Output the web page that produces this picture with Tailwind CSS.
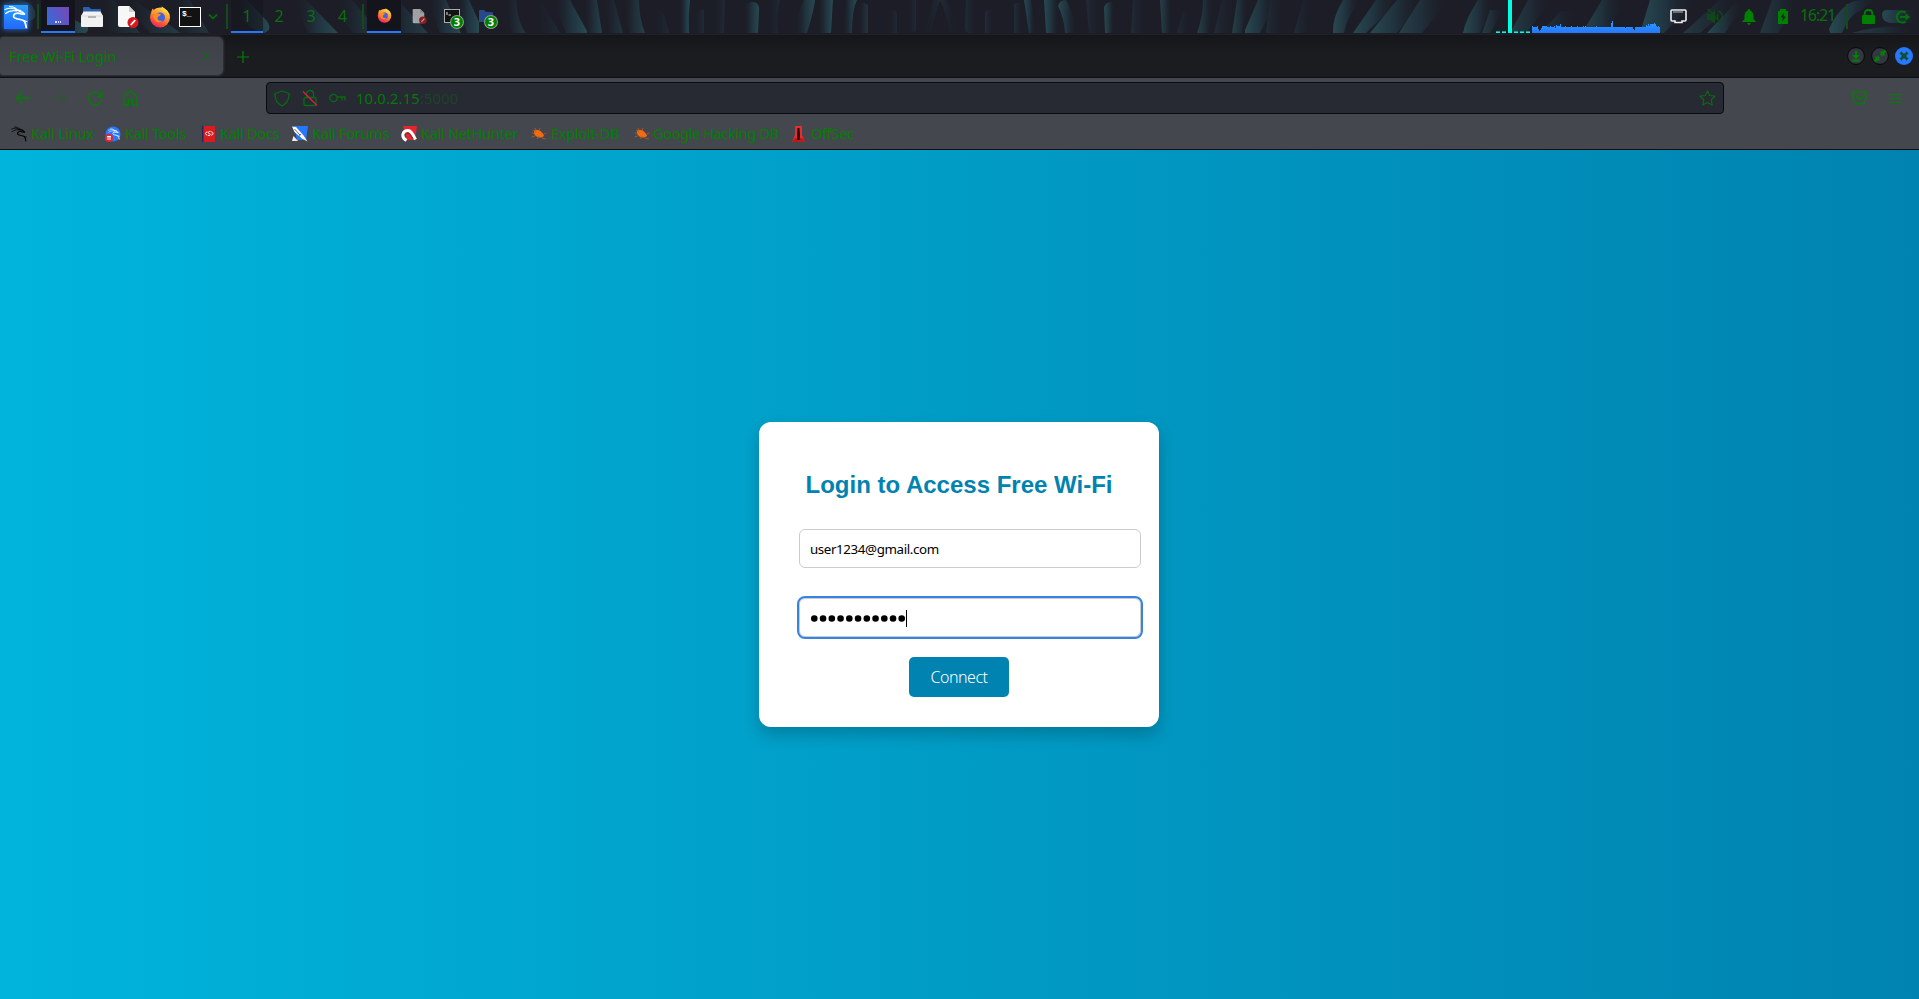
<!DOCTYPE html>
<html lang="en">
<head>
<meta charset="utf-8">
<title>Free Wi-Fi Login</title>
<script src="https://cdn.jsdelivr.net/npm/@tailwindcss/browser@4"></script>
</head>
<body class="flex h-screen flex-col overflow-hidden bg-[#191a1f] font-['Noto_Sans',sans-serif] text-[14.67px] text-[#008000]">

<!-- shared icons -->
<svg class="absolute size-0">
  <defs>
    <linearGradient id="l" x1="0" x2="1"><stop offset="0" stop-color="#1c1d26" stop-opacity="0"/><stop offset=".55" stop-color="#20333f"/><stop offset="1" stop-color="#284951"/></linearGradient>
    <linearGradient id="ld" x1="0" x2="1"><stop offset="0" stop-color="#1c1d26" stop-opacity="0"/><stop offset="1" stop-color="#202a37"/></linearGradient>
    <linearGradient id="r" x1="1" x2="0"><stop offset="0" stop-color="#1c1d26" stop-opacity="0"/><stop offset=".55" stop-color="#20333f"/><stop offset="1" stop-color="#284951"/></linearGradient>
    <linearGradient id="rd" x1="1" x2="0"><stop offset="0" stop-color="#1c1d26" stop-opacity="0"/><stop offset="1" stop-color="#202c38"/></linearGradient>
    <linearGradient id="fx" x1=".8" y1="0" x2=".3" y2="1"><stop offset="0" stop-color="#ffe04a"/><stop offset=".45" stop-color="#ff9230"/><stop offset=".8" stop-color="#ff4340"/><stop offset="1" stop-color="#e52468"/></linearGradient>
    <linearGradient id="desk" x1="0" x2="1" y1=".6" y2=".2"><stop offset="0" stop-color="#3c67d8"/><stop offset="1" stop-color="#744ab4"/></linearGradient>
    <linearGradient id="net" x1="0" y1="0" x2="0" y2="1"><stop offset="0" stop-color="#2b9cff"/><stop offset="1" stop-color="#2777ff"/></linearGradient>
  </defs>
  <symbol id="dragon" viewBox="0 0 24 24">
    <g fill="none" stroke="currentColor" stroke-linecap="round" stroke-linejoin="round">
      <path stroke-width="1.1" d="M1 4.500C5 2.700 9 2.700 13 5M1.500 8.500C5 5.700 9 5.200 13 6M5.500 1.500C9 1.500 11 2.500 13 4.500"/>
      <path stroke-width="1.700" d="M12 5C14.500 5 16 6.500 18.500 7.200L20.500 9.200L17 8.800C13 7.500 9.500 8.500 9.600 11.300C10 15 18.500 13.500 20.500 16.500C21.500 18.300 22 20.500 22.300 22.500"/>
      <path stroke-width="1" d="M19.500 15.500L23 16.500M14 5L17 5.500"/>
    </g>
  </symbol>
  <symbol id="firefox" viewBox="0 0 22 22">
    <circle cx="11" cy="11.500" r="10" fill="url(#fx)"/>
    <path d="M12.500.5C15 2 19.500 4.500 20.500 9.500C18 7 16 6.500 15.500 6.300C13 5 12.300 2.500 12.500.5Z" fill="#ffd43d"/>
    <path d="M2 6.500L3.500 2.500L6.500 5.500L9.500 5.800L7 9Z" fill="#ff9a2e"/>
    <circle cx="11" cy="11.500" r="5" fill="#4263d9"/>
    <path d="M4 10L8 7L12 8.500C11 10 9.500 10 8.500 11.500C8 14 10 15.500 13.500 14.500C11 18 5 16.500 4 10Z" fill="#ff8a28"/>
  </symbol>
  <symbol id="doc" viewBox="0 0 22 24">
    <path d="M1 2Q1 1 2 1H12L18 7V20Q18 22 16 22H3Q1 22 1 20Z" fill="#f7f7f7"/><path d="M12 1V7H18Z" fill="#cfcfcf"/>
    <circle cx="16" cy="17.500" r="5.500" fill="#d71a1f"/><path d="M13.800 20L18.200 15.200" stroke="#fff" stroke-width="1.800"/>
  </symbol>
  <symbol id="bug" viewBox="0 0 16 14">
    <path d="M3 3.500C6 2 10 3 13 8.500C11.500 11.500 6 11.500 3 7Z" fill="#f26a11"/>
    <path d="M1 6L4 6.500M.500 10L5 8.500M6 12L8 9M11 11L15 12M12 7.500L15.500 6M8 4L9 1M5 4L4 1M2 3L5 5" stroke="#b45a25" stroke-width=".8"/>
  </symbol>
</svg>

<!-- desktop panel -->
<header class="relative isolate flex h-[35px] shrink-0 items-start overflow-hidden border-b border-[#202126] bg-[#1c1d26]">
  <svg class="absolute inset-0 -z-10" width="1919" height="33">
    <g fill="url(#l)">
      <path d="M-5 0H22Q37 5 35 17Q30 25 15 17L-5 8Z" opacity=".6"/><path d="M26 0H40L82 24Q92 26 86 33H66Z"/><path d="M97 0H114L140 33H108Z" opacity=".5"/><path d="M122 0H134L181 33H150Z" opacity=".7"/><path d="M168 0H190L209 33H178Z" opacity=".5"/>
      <path d="M236 0H247L267 21Q273 30 264 33Q252 32 232 10Z"/><path d="M292 0H306L338 33H308Z"/><path d="M332 0H352L380 33H352Z" opacity=".6"/><path d="M382 0H398L428 33H398Z" opacity=".7"/><path d="M427 0H446L461 33H440Z"/><path d="M455 0H469L479 22V33H467Z"/>
      <path d="M504 0H516Q518 24 526 33H512Z" opacity=".6"/><path d="M552 0H570L587 31V33H566Z"/><path d="M583 0H597L602 33H588Z" opacity=".8"/><path d="M603 0H614L623 33H610Z" opacity=".5"/><path d="M622 0H639Q639 18 645 33H630Z" opacity=".8"/>
      <path d="M679 0H690Q688 16 689 33H680Z"/><path d="M743 8Q746 1 754 2Q760 4 759 11L758 33H745Z"/><path d="M804 0H815Q814 10 807 33H794Q797 13 804 0Z"/><path d="M820 0H833L831 33H817Z"/><path d="M846 0H857Q852 10 852 33H842Z"/><path d="M858 4Q863 1 868 5V33H860Z" opacity=".5"/>
    </g>
    <g fill="url(#ld)">
      <path d="M532 0H541L560 33H540Z"/><path d="M653 9Q660 8 664 14L669 33H657Z"/><path d="M712 0H725L724 33H711Z"/><path d="M766 0H780Q776 16 778 33H768Z"/><path d="M694 10H704V33H692Z"/><path d="M887 10Q897 8 897 16V33H887Z"/><path d="M906 0H916V31L912 33L906 31Z"/><path d="M933 0H940Q934 18 931 33H921Q930 15 933 0Z"/>
    </g>
    <g fill="url(#rd)">
      <path d="M940 0H946Q956 15 960 33H950Q947 15 940 0Z"/><path d="M966 0H978L974 33H968Q965 32 965 28Z"/><path d="M985 12Q990 7 994 11V33H985Z"/><path d="M1014 4Q1019 1 1024 5V33H1014Z"/><path d="M1086 0H1103V33H1089Z"/><path d="M1133 0H1148V33H1131Z"/><path d="M1183 11Q1188 7 1192 11L1188 33H1177Z"/><path d="M1222 0H1236L1229 33H1214Z"/><path d="M1303 0H1315L1306 33H1294Z"/><path d="M1270 0H1286L1281 33H1266Z"/>
    </g>
    <g fill="url(#r)">
      <path d="M1024 0H1031L1036 33H1029Z"/><path d="M1044 0H1058L1060 33H1046Z"/><path d="M1058 6Q1059 0 1066 0Q1075 14 1077 33H1065Q1064 18 1058 6Z"/><path d="M1104 7Q1106 2 1111 2Q1115 4 1115 10V33H1105Z"/><path d="M1160 0H1172V33H1162Z" opacity=".8"/><path d="M1203 0H1214Q1213 18 1208 33H1197Q1203 16 1203 0Z" opacity=".8"/><path d="M1237 0H1249L1242 33H1232Z" opacity=".8"/><path d="M1258 0H1277L1260 33H1245V30Z"/><path d="M1343 0H1362Q1347 14 1344 33H1333Q1332 18 1343 0Z"/><path d="M1376 0H1400L1366 33H1353Z"/>
      <path d="M1397 0H1424L1397 33H1370Z"/><path d="M1420 0H1450L1422 33H1399Z" opacity=".8"/><path d="M1478 0H1494L1480 33H1463Q1465 20 1478 0Z"/><path d="M1490 10H1504L1490 33H1482Z" opacity=".7"/><path d="M1528 0H1553L1526 33H1510Z" opacity=".7"/><path d="M1560 12Q1572 8 1578 14L1560 33H1540Z" opacity=".5"/><path d="M1602 0H1626L1606 33H1582Z" opacity=".9"/><path d="M1650 0H1698L1664 33H1640Z"/>
      <path d="M1720 0H1740L1700 33H1683Z" opacity=".6"/><path d="M1735 3Q1742 0 1744 6L1725 33H1707Z"/><path d="M1772 0H1800L1778 33H1760Z" opacity=".6"/><path d="M1829 29Q1842 0 1862 0H1880Q1867 5 1860 11Q1850 14 1842 33H1830Z"/><path d="M1882 14Q1883 9 1890 10H1919V23H1890Q1882 22 1882 14Z"/><path d="M1852 33Q1880 24 1919 27V33Z" opacity=".7"/>
    </g>
  </svg>

  <div class="flex h-[33px] w-[34px] items-center justify-center pr-[2px]">
    <div class="flex size-6 items-center justify-center bg-linear-to-b from-[#2ba0ff] to-[#2467ff] text-white shadow-[0_0_5px_1px_#2463b5]"><svg class="size-6"><use href="#dragon"/></svg></div>
  </div>
  <div class="flex w-[7px] justify-center pt-1"><div class="h-[25px] w-[2px] bg-[#124b19]"></div></div>
  <div class="flex h-[33px] w-[34px] items-center justify-center border-b-2 border-[#2777ff] bg-[#14151c]">
    <svg width="22" height="18"><rect width="22" height="18" fill="url(#desk)"/><path d="M8 15h2m1 0h1m1 0h1" stroke="#fff" stroke-width="1.500"/></svg>
  </div>
  <div class="flex h-[33px] w-[34px] items-center justify-center"><svg width="22" height="22"><path d="M2 9V2Q2 1 3 1H8L10 3H19Q20 3 20 4V9Z" fill="#2c5fae"/><path d="M2.500 5.500H19.500L22 10V20Q22 21 21 21H1Q0 21 0 20V10Z" fill="#f1f1f1"/><path d="M0 10H22" stroke="#d9d9d9"/><path d="M7 11H15" stroke="#b5b5b5" stroke-width="2"/></svg></div>
  <div class="flex h-[33px] w-[34px] items-center justify-center"><svg class="ml-[3px]" width="22" height="24"><use href="#doc"/></svg></div>
  <div class="flex h-[33px] w-[34px] items-center justify-center"><svg width="22" height="22"><use href="#firefox"/></svg></div>
  <div class="flex h-[33px] w-[27px] items-center pl-[2px]"><div class="flex h-5 w-[22px] items-start border border-white bg-[#121212] pt-[1px] pl-[2px] font-['Liberation_Mono',monospace] text-[8px] leading-[10px] font-bold text-white">$_</div></div>
  <div class="flex h-[33px] w-[18px] items-center justify-center"><svg width="10" height="8" fill="none" stroke="#0a650e" stroke-width="1.800"><path d="M1 1.500L5 5.500L9 1.500"/></svg></div>
  <div class="flex w-[9px] justify-center pt-1"><div class="h-[25px] w-[2px] bg-[#124b19]"></div></div>
  <nav class="flex text-base leading-[32px] text-[#08700b]">
    <div class="h-[33px] w-8 border-b-2 border-[#2777ff] bg-[#14151c]/60 text-center">1</div>
    <div class="w-8 text-center">2</div>
    <div class="w-8 text-center">3</div>
    <div class="w-8 pr-px text-center">4</div>
  </nav>
  <div class="flex w-[8px] justify-center pt-1"><div class="h-[25px] w-[2px] bg-[#124b19]"></div></div>
  <div class="flex h-[33px] w-[34px] items-center justify-center border-b-2 border-[#2777ff] bg-[#14151c]"><svg width="15" height="15"><use href="#firefox"/></svg></div>
  <div class="flex h-[33px] w-[34px] items-center justify-center opacity-60"><svg class="ml-[3px]" width="15" height="17"><use href="#doc"/></svg></div>
  <div class="relative flex h-[33px] w-[34px] items-start justify-center pt-[9px]"><svg width="17" height="15"><rect x=".5" y=".5" width="15" height="13" fill="#131313" stroke="#ababab"/><path d="M3 3V6M4.500 6H7" stroke="#ddd" fill="none"/></svg>
    <span class="absolute top-[16px] left-[16px] flex size-[12px] items-center justify-center rounded-full bg-[#008000] text-[11px] font-bold text-white ring-1 ring-[#8aa18a]">3</span></div>
  <div class="relative flex h-[33px] w-[34px] items-start justify-center pt-[10px]"><svg width="15" height="12"><path d="M0 1Q0 0 1 0H5L7 2H13Q14 2 14 3V12H0Z" fill="#27498a"/></svg>
    <span class="absolute top-[16px] left-[16px] flex size-[12px] items-center justify-center rounded-full bg-[#008000] text-[11px] font-bold text-white ring-1 ring-[#8aa18a]">3</span></div>

  <div class="ml-auto flex h-[33px] items-center">
    <svg width="164" height="33">
      <path d="M0 32H4M6 32H10M18 32H22M24 32H28M30 32H34" stroke="#00ffe0" stroke-width="2"/><path d="M0 31.400H4M6 31.400H10M18 31.400H22M24 31.400H28M30 31.400H34" stroke="#117c78" stroke-width=".8"/>
      <rect x="12" width="4" height="33" fill="#00ffe0"/>
      <path fill="url(#net)" shape-rendering="crispEdges" d="M36 33V26H37V27H41V26H42V29H43V31H44V30H45V28H46V26H51V27H54V26H55V27H58V26H59V28H60V25H61V26H64V24H65V27H69V26H70V27H75V26H76V27H81V26H82V27H87V26H88V27H89V26H90V27H100V26H101V27H115V23H116V21H117V27H129V28H130V27H137V29H138V30H139V27H150V25H151V26H152V24H153V26H154V24H158V23H159V24H160V26H161V27H162V26H163V27H164V33Z"/>
    </svg>
    <div class="flex w-[37px] justify-center"><svg width="17" height="15" fill="none" stroke="#eeeef0" stroke-width="1.600"><path d="M1 2Q1 1 2 1H15Q16 1 16 2V11Q16 12 15 12H12V13.500H5V12H2Q1 12 1 11Z"/><path d="M4 2V4M6 2V4M8 2V4M10 2V4M12 2V4" stroke-width="1" opacity=".75"/></svg></div>
    <div class="flex w-[35px] justify-center"><svg width="18" height="18" fill="#0f461a" stroke="#0f461a"><path d="M1 6H4L9 2V16L4 12H1Z" stroke="none"/><path d="M2 1L17 17" stroke-width="1.800"/><path d="M11 6Q13 9 11 12M12 3Q17 5 16 9Q16 12 14 13" fill="none" stroke-width="1.500"/></svg></div>
    <div class="flex w-[34px] justify-center"><svg width="14" height="16" fill="#008000"><path d="M7 0Q8.500 0 8.500 1.700Q11.500 3 11.500 7V10L14 13H0L2.500 10V7Q2.500 3 5.500 1.700Q5.500 0 7 0ZM5 14H9Q8 16 7 16Q6 16 5 14Z"/></svg></div>
    <div class="flex w-[34px] justify-center"><svg width="10" height="15"><path d="M2 2V0H8V2H10V15H0V2Z" fill="#008000"/><path d="M6 3.500L2.500 8.500H5L4 12.500L8 7.500H5.500Z" fill="#16241b"/></svg></div>
    <time class="w-[37px] pb-[2px] text-[15.500px] tracking-[-0.85px] whitespace-nowrap text-[#06720b]">16:21</time>
    <div class="flex h-[33px] w-[20px] justify-center pt-1"><div class="h-[25px] w-[2px] bg-[#124b19]"></div></div>
    <div class="flex w-[22px] justify-center"><svg width="13" height="15"><path d="M2.700 7V4.500Q2.700 1 6.500 1Q10.300 1 10.300 4.500V7" fill="none" stroke="#008000" stroke-width="1.800"/><rect y="6" width="13" height="9" rx="1" fill="#008000"/></svg></div>
    <div class="flex w-[40px] justify-center pl-[7px]"><svg width="16" height="14" fill="none" stroke="#066e0c" stroke-width="2.200"><path d="M10.500 2.500A5.500 5.500 0 1 0 10.500 11.500"/><path d="M5 7H12" /><path d="M10.500 3L15 7L10.500 11Z" fill="#066e0c" stroke="none"/></svg></div>
  </div>
</header>

<!-- tab strip -->
<section class="flex h-[43px] shrink-0 items-start border-b border-[#0e0f13] bg-linear-to-b from-[#15161a] to-[#1b1c20] to-40% pt-[2px]">
  <div class="flex h-[38px] w-[223px] items-center justify-between rounded-r-[5px] rounded-l-[3px] bg-linear-to-b from-[#3f4148] to-[#44474e] pr-[12px] pb-px pl-[9px] shadow-[0_0_2px_1px_#33353b]">
    <span class="tracking-[-0.15px] text-[#008000]">Free Wi-Fi Login</span>
    <svg width="10" height="10" stroke="#0c6a13"><path d="M1 1L9 9M9 1L1 9"/></svg>
  </div>
  <svg class="mt-[14px] ml-[14px]" width="12" height="12" stroke="#008000" stroke-width="1.200"><path d="M6 0V12M0 6H12"/></svg>
  <div class="mt-[10px] mr-[6px] ml-auto flex gap-[6px]">
    <svg width="18" height="18"><circle cx="9" cy="9" r="8.400" fill="#343741" stroke="#07080b"/><path d="M9 4V10M5 13.500H13" stroke="#008000" stroke-width="2"/><path d="M5 8H13L9 12Z" fill="#008000"/></svg>
    <svg width="18" height="18"><circle cx="9" cy="9" r="8.400" fill="#343741" stroke="#07080b"/><path d="M9.500 3.500V8.500H14.500L13 7L15.500 4.500L13.500 2.500L11 5ZM8.500 14.500V9.500H3.500L5 11L2.500 13.500L4.500 15.500L7 13Z" fill="#008000"/></svg>
    <svg width="18" height="18"><circle cx="9" cy="9" r="9" fill="#2777ff"/><path d="M5.500 5.500L12.500 12.500M12.500 5.500L5.500 12.500" stroke="#0d4f2f" stroke-width="2.800"/></svg>
  </div>
</section>

<!-- navigation bar and bookmarks -->
<section class="flex h-[72px] shrink-0 flex-col border-b border-[#0b0c10] bg-[#44474e]">
  <div class="flex h-10 items-center pl-[15px]">
    <svg width="16" height="14" fill="none" stroke="#008000" stroke-width="1.300" stroke-linecap="round" stroke-linejoin="round"><path d="M15 7H1.500M7 1.500L1.500 7L7 12.500"/></svg>
    <svg class="ml-[21px]" width="16" height="14" fill="none" stroke="#2f5536" stroke-width="1.300" stroke-linecap="round" stroke-linejoin="round"><path d="M1 7H14M8.500 1.500L14 7L8.500 12.500"/></svg>
    <svg class="ml-[20px]" width="15" height="15" fill="none" stroke="#008000" stroke-width="1.300"><path d="M13.700 8A6.500 6.500 0 1 1 11.500 2.500L13 4"/><path d="M14.500 .5V6.500H8.500Z" fill="#008000" stroke="none"/></svg>
    <svg class="ml-[20px]" width="15" height="16" fill="none" stroke="#008000" stroke-width="1.300"><path d="M1 6.500L7.500 1L14 6.500V15H9.500V10.500Q9.500 8.800 7.500 8.800Q5.500 8.800 5.500 10.500V15H1Z" stroke-linejoin="round"/></svg>
    <div class="ml-[128px] flex h-8 w-[1458px] items-center rounded border border-[#0b0c11] bg-[#272933] pr-[7px] pl-[7px]">
      <svg width="16" height="17" fill="none" stroke="#0a6b11" stroke-width="1.300"><path d="M8 1L15 3.500C15.300 9 13 13.500 8 16C3 13.500 .7 9 1 3.500Z" stroke-linejoin="round"/></svg>
      <svg class="ml-[12px]" width="16" height="18" fill="none"><path d="M3 8.500H13Q14 8.500 14 9.500V15Q14 16.500 12.500 16.500H3.500Q2 16.500 2 15V9.500Q2 8.500 3 8.500ZM4.500 8V5Q4.500 1.500 8 1.500Q11.500 1.500 11.500 5V8" stroke="#0a6b11" stroke-width="1.300"/><path d="M1 2.500L15 16.500" stroke="#e01c46" stroke-width="1.200"/></svg>
      <svg class="ml-[11px]" width="17" height="10" fill="none" stroke="#0a6b11" stroke-width="1.300"><circle cx="4.500" cy="5" r="3.700"/><path d="M8 4H16V7.500M13 4V7.500"/></svg>
      <p class="ml-[10px] tracking-[0.2px] text-[#047809]">10.0.2.15<span class="text-[#1c4426]">:5000</span></p>
      <svg class="ml-auto" width="17" height="16" fill="none" stroke="#0a6b11" stroke-width="1.200"><path d="M8.500 1L10.700 5.500L16 6.200L12.200 9.700L13.200 15L8.500 12.500L3.800 15L4.800 9.700L1 6.200L6.300 5.500Z" stroke-linejoin="round"/></svg>
    </div>
    <svg class="ml-[128px]" width="15" height="14" fill="none" stroke="#008000" stroke-width="1.400"><path d="M2 1H13Q14 1 14 2V6Q14 13 7.500 13Q1 13 1 6V2Q1 1 2 1Z"/><path d="M4 5L7.500 8.300L11 5" stroke-linecap="round"/></svg>
    <svg class="ml-[22px]" width="13" height="11" stroke="#008000" stroke-width="1.100"><path d="M0 1.500H13M0 5.500H13M0 9.500H13"/></svg>
  </div>
  <nav class="flex h-[31px] items-start pt-[1px] pl-[11px] leading-[29px] tracking-[-0.35px] whitespace-nowrap text-[#008000]">
    <div class="flex w-[94px] items-center gap-1"><svg class="size-4 text-black"><use href="#dragon"/></svg>Kali Linux</div>
    <div class="flex w-[97px] items-center gap-1"><svg class="size-4 text-white" viewBox="0 0 16 16"><circle cx="8" cy="8" r="7.500" fill="#2777ff"/><svg x="3" y="2" width="12" height="12"><use href="#dragon"/></svg><circle cx="4" cy="12" r="4" fill="#e32636"/><path d="M2 10.500H6M3 10.500V14M5 10.500V14" stroke="#fff"/></svg>Kali Tools</div>
    <div class="flex w-[90px] items-center gap-[5px]"><svg width="13" height="16"><rect width="13" height="16" fill="#d71d20"/><path d="M.750 0V16" stroke="#1c2a62" stroke-width="1.500"/><path d="M5 5.500L3.500 7.500L5 9.500M9.500 5.500L11 7.500L9.500 9.500M8.500 5.500C6 5 5.500 7.200 7.200 7.500C9 7.800 8.500 10 6 9.500" stroke="#fff" fill="none"/></svg>Kali Docs</div>
    <div class="flex w-[109px] items-center gap-1"><svg width="16" height="16"><path d="M2 0H16L14 14H5Z" fill="#2777ff"/><path d="M0 15L1.500 10L6 15Z" fill="#eee"/><path d="M0 .5L4 1L11.500 9.500L15.500 15.500L10 12.500L2.500 6Z" fill="#fff"/><path d="M2.500 3L8 9M9 8L7 10.500" stroke="#444" stroke-width=".8"/></svg>Kali Forums</div>
    <div class="flex w-[130px] items-center gap-1"><svg width="16" height="16"><path d="M2 0H16L14 14H6Z" fill="#e3262d"/><path d="M5.500 14.500C-.5 11 1.500 4.500 7 4.500C10 4.500 11.500 8 14.500 13.500" stroke="#fff" stroke-width="3" fill="none"/><path d="M5 8.500C7 5.500 9 7.500 12 12.500" stroke="#333" stroke-width=".8" fill="none"/></svg>Kali NetHunter</div>
    <div class="flex w-[103px] items-center gap-1"><svg width="16" height="14"><use href="#bug"/></svg>Exploit-DB</div>
    <div class="flex w-[158px] items-center gap-[3px] tracking-[-0.45px]"><svg width="16" height="14"><use href="#bug"/></svg>Google Hacking DB</div>
    <div class="flex items-center gap-[6px]"><svg width="13" height="16"><path d="M3 0H10V9L13 16H0L3 9Z" fill="#e62c2c"/><path d="M0 16L3 12H10L13 16Z" fill="#c01717"/><path d="M5.500 2H7.500L8 9L7.500 14H5.500L5 9Z" fill="#250508"/></svg>OffSec</div>
  </nav>
</section>

<!-- captive portal page -->
<main class="flex flex-1 items-center justify-center bg-[linear-gradient(to_right,#00b4db,#0083b0)] text-black">
  <form class="mr-px flex h-[305px] w-[400px] flex-col items-center rounded-xl bg-white pt-[49px] shadow-[0_8px_16px_rgba(0,0,0,0.2)]">
    <h2 class="font-['Liberation_Sans',Arial,sans-serif] text-2xl leading-[27px] font-bold text-[#0083b0]">Login to Access Free Wi-Fi</h2>
    <div class="mt-[31px] ml-[22px] flex h-[39px] w-[342px] shrink-0 items-center rounded-md border border-[#ccc] px-[10px] pt-[2px] text-[13.330px] tracking-[-0.38px]">user1234@gmail.com</div>
    <div class="mt-[30px] ml-[22px] flex h-[39px] w-[342px] shrink-0 items-center rounded-md border border-[#ccc] px-[11px] pt-px outline-2 outline-[#3584e4]">
      <svg width="96" height="17" role="img" aria-label="password"><path d="M3.300 8.500h.01M12.050 8.500h.01M20.800 8.500h.01M29.550 8.500h.01M38.300 8.500h.01M47.050 8.500h.01M55.800 8.500h.01M64.550 8.500h.01M73.300 8.500h.01M82.050 8.500h.01M90.700 8.500h.01" stroke="#000" stroke-width="6.600" stroke-linecap="round"/><path d="M95.500 0V17" stroke="#000"/></svg>
    </div>
    <button type="button" class="mt-5 h-10 w-[100px] rounded-[5px] bg-[#0083b0] text-base font-light tracking-[-0.45px] text-white">Connect</button>
  </form>
</main>
</body>
</html>
